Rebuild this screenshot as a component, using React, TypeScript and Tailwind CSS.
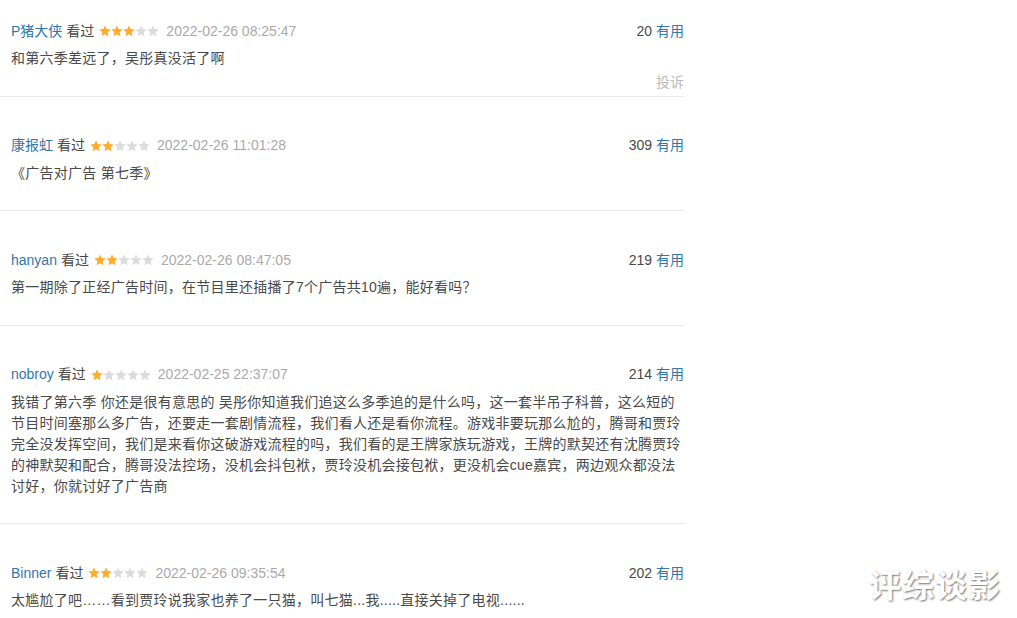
import React from "react";

type Review = {
  name: string;
  stars: number;
  date: string;
  votes: number;
  lines: string[];
  hovered?: boolean;
};

const reviews: Review[] = [
  { name: "P猪大侠", stars: 3, date: "2022-02-26 08:25:47", votes: 20, lines: ["和第六季差远了，吴彤真没活了啊"], hovered: true },
  { name: "康报虹", stars: 2, date: "2022-02-26 11:01:28", votes: 309, lines: ["《广告对广告 第七季》"] },
  { name: "hanyan", stars: 2, date: "2022-02-26 08:47:05", votes: 219, lines: ["第一期除了正经广告时间，在节目里还插播了7个广告共10遍，能好看吗？"] },
  {
    name: "nobroy",
    stars: 1,
    date: "2022-02-25 22:37:07",
    votes: 214,
    lines: [
      "我错了第六季 你还是很有意思的 吴彤你知道我们追这么多季追的是什么吗，这一套半吊子科普，这么短的",
      "节目时间塞那么多广告，还要走一套剧情流程，我们看人还是看你流程。游戏非要玩那么尬的，腾哥和贾玲",
      "完全没发挥空间，我们是来看你这破游戏流程的吗，我们看的是王牌家族玩游戏，王牌的默契还有沈腾贾玲",
      "的神默契和配合，腾哥没法控场，没机会抖包袱，贾玲没机会接包袱，更没机会cue嘉宾，两边观众都没法",
      "讨好，你就讨好了广告商",
    ],
  },
  { name: "Binner", stars: 2, date: "2022-02-26 09:35:54", votes: 202, lines: ["太尴尬了吧……看到贾玲说我家也养了一只猫，叫七猫...我.....直接关掉了电视......"] },
];

function Stars({ n }: { n: number }) {
  const pts = "6,0.4 7.7,4.1 11.7,4.5 8.6,7.2 9.5,11.3 6,9.2 2.5,11.3 3.4,7.2 0.3,4.5 4.3,4.1";
  return (
    <svg width="60" height="12" viewBox="0 0 60 12" className="block">
      {[0, 1, 2, 3, 4].map((i) => (
        <polygon key={i} points={pts} transform={`translate(${i * 12},0)`} fill={i < n ? "#ffac2d" : "#dcdcdc"} />
      ))}
    </svg>
  );
}

export default function App() {
  return (
    <div
      className="relative w-[1017px] h-[618px] overflow-hidden bg-white"
      style={{ fontFamily: '"Liberation Sans", Arial, "Noto Sans CJK SC", sans-serif' }}
    >
      <div className="w-[684px] -mt-[18px]">
        {reviews.map((r, idx) => (
          <div key={idx} className="border-b border-[#eaeaea] pt-[39px] pb-[3.5px]">
            <div className="flex items-center h-[20px] pl-[11px] text-[14px] text-[#494949]">
              <span className="text-[#3377aa]">{r.name}</span>
              <span className="ml-[4px]">看过</span>
              <span className="ml-[5px]"><Stars n={r.stars} /></span>
              <span className="ml-[7px] text-[#aaaaaa]">{r.date}</span>
              <span className="ml-auto">
                {r.votes} <span className="text-[#3377aa]">有用</span>
              </span>
            </div>
            <div className="mt-[7px] pl-[11px] text-[14px] tracking-[0.25px] leading-[21px] text-[#494949] whitespace-nowrap">
              {r.lines.map((l, i) => (
                <div key={i}>{l}</div>
              ))}
            </div>
            <div className={`mt-[3px] h-[20px] flex items-center justify-end text-[14px] ${r.hovered ? "text-[#bbbbbb]" : "text-transparent"}`}>
              投诉
            </div>
          </div>
        ))}
      </div>
      <div
        className="absolute left-[869px] top-[559px] text-[32px] font-bold text-white tracking-[1px] [text-shadow:1px_1px_2px_rgba(0,0,0,0.55)]"
        style={{ fontFamily: '"Noto Sans CJK SC", sans-serif' }}
      >
        评综谈影
      </div>
    </div>
  );
}
